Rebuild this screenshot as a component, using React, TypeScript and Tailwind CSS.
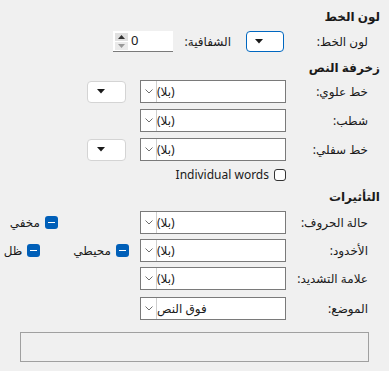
import React from "react";

const Tri = () => (
  <svg width="8" height="5" viewBox="0 0 8 5">
    <path d="M0 0 H8 L4 4.5 Z" fill="#1a1a1a" />
  </svg>
);

const Combo = ({ value = "(بلا)" }: { value?: string }) => (
  <div className="flex h-[23px] w-[146px] border border-[#7a7a7a] bg-white" dir="ltr">
    <div className="flex w-[16px] items-center justify-center border-r border-[#cfcfcf]">
      <svg width="8" height="5" viewBox="0 0 8 5">
        <path d="M0.5 0.5 L4 4 L7.5 0.5" fill="none" stroke="#606060" strokeWidth="0.9" />
      </svg>
    </div>
    <div className="flex flex-1 items-center justify-end pr-[3px]" dir="rtl">
      {value}
    </div>
  </div>
);

const SmallDrop = () => (
  <div className="mr-[14px] flex h-[22px] w-[39px] items-center rounded-[4px] border border-[#d4d4d4] bg-white pl-[9px]" dir="ltr">
    <Tri />
  </div>
);

const Mixed = ({ label }: { label: string }) => (
  <div className="flex items-center gap-[5px]">
    <div className="flex h-[13px] w-[13px] items-center justify-center rounded-[3px] bg-[#005fb8]">
      <div className="h-[1.5px] w-[7px] bg-white" />
    </div>
    <span>{label}</span>
  </div>
);

const Row = ({ label, children, mt }: { label: string; children: React.ReactNode; mt: string }) => (
  <div className={`flex h-[23px] items-center pr-[12px] ${mt}`}>
    <div className="w-[82px]">{label}</div>
    {children}
  </div>
);

const Heading = ({ children, mt }: { children: React.ReactNode; mt: string }) => (
  <div className={`flex h-[18px] items-center font-bold ${mt}`}>{children}</div>
);

export default function App() {
  return (
    <div
      dir="rtl"
      className="flex h-[371px] w-[389px] flex-col bg-[#f0f0f0] pr-[9px] pt-[8px] font-['Noto_Sans','DejaVu_Sans',sans-serif] text-[12px] text-[#1a1a1a]"
    >
      <Heading mt="mt-0">لون الخط</Heading>
      <div className="mt-[5px] flex h-[21px] items-center pr-[12px]">
        <div className="w-[84px]">لون الخط:</div>
        <div className="flex h-[21px] w-[38px] items-center rounded-[4px] border border-[#0067c0] bg-white pl-[8px]" dir="ltr">
          <Tri />
        </div>
        <div className="ms-[15px] w-[58px]">الشفافية:</div>
        <div className="flex h-[21px] w-[60px] items-center border-b border-[#7a7a7a] bg-white" dir="ltr">
          <div className="ml-[2px] flex w-[13px] flex-col gap-[1px]">
            <div className="flex h-[8px] items-center justify-center bg-[#e0e0e0]">
              <svg width="7" height="4" viewBox="0 0 7 4"><path d="M0 4 L3.5 0 L7 4 Z" fill="#333" /></svg>
            </div>
            <div className="flex h-[8px] items-center justify-center bg-[#eaeaea]">
              <svg width="7" height="4" viewBox="0 0 7 4"><path d="M0 0 L3.5 4 L7 0 Z" fill="#999" /></svg>
            </div>
          </div>
          <span className="ml-[3px] text-[13px]">0</span>
        </div>
      </div>

      <Heading mt="mt-[7px]">زخرفة النص</Heading>
      <Row label="خط علوي:" mt="mt-[3px]">
        <Combo />
        <SmallDrop />
      </Row>
      <Row label="شطب:" mt="mt-[6px]">
        <Combo />
      </Row>
      <Row label="خط سفلي:" mt="mt-[6px]">
        <Combo />
        <SmallDrop />
      </Row>
      <div className="mt-[7px] flex h-[14px] items-center pr-[12px]">
        <div className="w-[82px]" />
        <div className="flex items-center gap-[5px]">
          <div className="h-[12px] w-[12px] rounded-[3px] border border-[#333] bg-white" />
          <span dir="ltr">Individual words</span>
        </div>
      </div>

      <Heading mt="mt-[6px]">التأثيرات</Heading>
      <Row label="حالة الحروف:" mt="mt-[5px]">
        <Combo />
        <div className="ms-[82px]">
          <Mixed label="مخفي" />
        </div>
      </Row>
      <Row label="الأخدود:" mt="mt-[5px]">
        <Combo />
        <div className="ms-[11px]">
          <Mixed label="محيطي" />
        </div>
        <div className="ms-[33px]">
          <Mixed label="ظل" />
        </div>
      </Row>
      <Row label="علامة التشديد:" mt="mt-[5px]">
        <Combo />
      </Row>
      <Row label="الموضع:" mt="mt-[7px]">
        <Combo value="فوق النص" />
      </Row>

      <div className="mt-[12px] ml-[20px] mr-[11px] h-[30px] border border-[#a0a0a0]" />
    </div>
  );
}
